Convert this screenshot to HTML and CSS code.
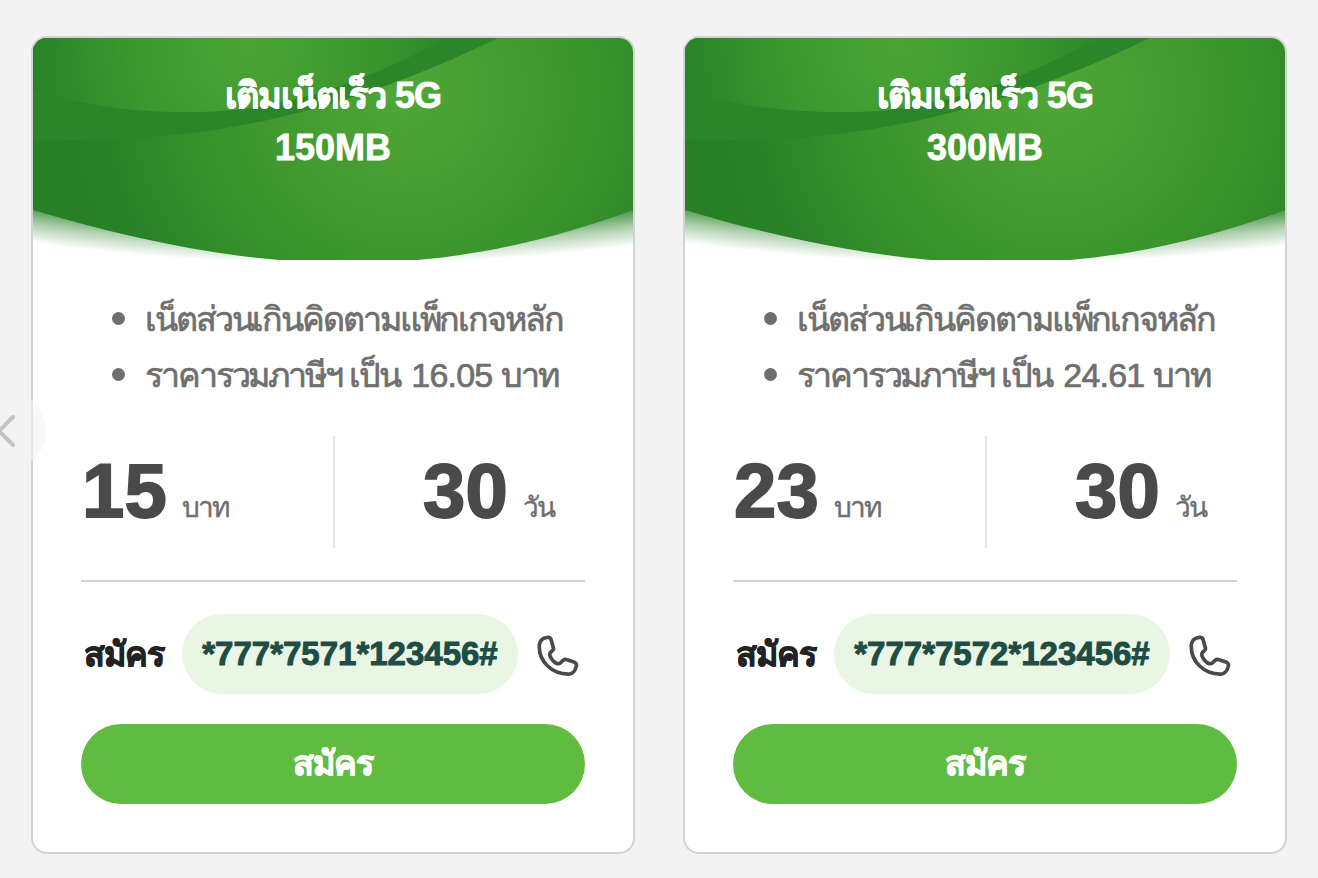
FILE: index.html
```html
<!DOCTYPE html>
<html lang="th">
<head>
    <meta charset="UTF-8">
    <meta name="viewport" content="width=device-width, initial-scale=1.0">
    <title>เติมเน็ตเร็ว 5G</title>
    <link rel="stylesheet" href="styles.css">
</head>
<body>
    <!-- Shared header artwork and icons -->
    <svg class="defs" width="0" height="0">
        <defs>
            <radialGradient id="mainGreen" gradientUnits="userSpaceOnUse" cx="370" cy="55" r="340">
                <stop offset="0" stop-color="#4fa737"/>
                <stop offset="0.4" stop-color="#41992f"/>
                <stop offset="0.72" stop-color="#338c2a"/>
                <stop offset="0.87" stop-color="#298227"/>
                <stop offset="1" stop-color="#288026"/>
            </radialGradient>
            <radialGradient id="topGreen" gradientUnits="userSpaceOnUse" cx="215" cy="10" r="215">
                <stop offset="0" stop-color="#4ba434"/>
                <stop offset="0.5" stop-color="#3f982f"/>
                <stop offset="1" stop-color="#298428"/>
            </radialGradient>
            <radialGradient id="fade" gradientUnits="userSpaceOnUse" cx="310" cy="-2072" r="2298">
                <stop offset="0.9845" stop-color="#2b8429" stop-opacity="0.85"/>
                <stop offset="0.992" stop-color="#2b8429" stop-opacity="0.38"/>
                <stop offset="1" stop-color="#2b8429" stop-opacity="0"/>
            </radialGradient>
            <symbol id="cover" viewBox="0 0 600 222">
                <rect y="150" width="600" height="72" fill="url(#fade)"/>
                <path d="M0 0H600V172C505 207 415 225 315 225C215 225 110 205 0 172Z" fill="url(#mainGreen)"/>
                <path d="M0 0H465C310 75 170 108 0 101Z" fill="#2b8629"/>
                <path d="M0 0H414C330 45 250 73 167 74C110 75 60 70 0 52Z" fill="url(#topGreen)"/>
            </symbol>
            <symbol id="phone" viewBox="36 45 126 126">
                <path d="M57 55L68 52Q75 51 78 58L85 83Q87 88 82 92L76 98Q73 102 75 108Q83 126 97 131Q102 132 106 129L114 121Q119 117 126 119L149 127Q156 130 154 138Q150 158 135 162C82 165 40 124 43 75Q46 59 57 55Z"
                      fill="none" stroke="#4a4a4a" stroke-width="11" stroke-linejoin="round"/>
            </symbol>
        </defs>
    </svg>

    <div class="slider">
        <div class="card">
            <div class="card-header">
                <svg class="cover"><use href="#cover"/></svg>
                <h2 class="card-title"><span class="title-name">เติมเน็ตเร็ว 5G</span><br>150MB</h2>
            </div>
            <div class="card-body">
                <ul class="details">
                    <li>เน็ตส่วนเกินคิดตามแพ็กเกจหลัก</li>
                    <li>ราคารวมภาษีฯ เป็น <span class="detail-price">16.05</span> บาท</li>
                </ul>
                <div class="summary">
                    <div class="price"><strong>15</strong><span>บาท</span></div>
                    <div class="days"><strong>30</strong><span>วัน</span></div>
                </div>
                <div class="ussd">
                    <span class="ussd-label">สมัคร</span>
                    <span class="ussd-code">*777*7571*123456#</span>
                    <svg class="phone-icon"><use href="#phone"/></svg>
                </div>
                <button class="apply-button">สมัคร</button>
            </div>
        </div>

        <div class="card">
            <div class="card-header">
                <svg class="cover"><use href="#cover"/></svg>
                <h2 class="card-title"><span class="title-name">เติมเน็ตเร็ว 5G</span><br>300MB</h2>
            </div>
            <div class="card-body">
                <ul class="details">
                    <li>เน็ตส่วนเกินคิดตามแพ็กเกจหลัก</li>
                    <li>ราคารวมภาษีฯ เป็น <span class="detail-price">24.61</span> บาท</li>
                </ul>
                <div class="summary">
                    <div class="price"><strong>23</strong><span>บาท</span></div>
                    <div class="days"><strong>30</strong><span>วัน</span></div>
                </div>
                <div class="ussd">
                    <span class="ussd-label">สมัคร</span>
                    <span class="ussd-code">*777*7572*123456#</span>
                    <svg class="phone-icon"><use href="#phone"/></svg>
                </div>
                <button class="apply-button">สมัคร</button>
            </div>
        </div>

        <button class="prev-button" aria-label="ก่อนหน้า">
            <svg width="80" height="80" viewBox="0 0 80 80">
                <path d="M47 26L33 40L47 54" fill="none" stroke="#c3c3c3" stroke-width="4" stroke-linecap="round" stroke-linejoin="round"/>
            </svg>
        </button>
    </div>
</body>
</html>
```
FILE: styles.css
```css
* {
    box-sizing: border-box;
}

body {
    margin: 0;
    background: #f3f3f3;
    font-family: "Liberation Sans", Arial, sans-serif;
    color: #6f6f6f;
    overflow: hidden;
}

.defs {
    position: absolute;
}

.slider {
    position: relative;
    display: flex;
    gap: 48px;
    height: 878px;
    padding: 36px 31px 24px;
}

/* Card */
.card {
    flex: none;
    width: 604px;
    background: #fff;
    border: 2px solid #d3d3d3;
    border-radius: 16px;
    overflow: hidden;
}

.card-header {
    position: relative;
    height: 222px;
    padding-top: 32px;
}

.cover {
    position: absolute;
    top: 0;
    left: 0;
    width: 600px;
    height: 222px;
}

.card-title {
    position: relative;
    margin: 0;
    color: #fff;
    font-size: 36px;
    line-height: 52px;
    text-align: center;
    white-space: nowrap;
    -webkit-text-stroke: 0.8px #fff;
}

.title-name {
    letter-spacing: -1px;
}

.card-body {
    padding: 31px 48px 0;
}

.details {
    margin: 0;
    padding: 0 0 0 64px;
    list-style: none;
    font-size: 34px;
    line-height: 56px;
    letter-spacing: -2.1px;
    white-space: nowrap;
    -webkit-text-stroke: 0.7px #6f6f6f;
}

.details li {
    position: relative;
    height: 56px;
}

.details li::before {
    content: "";
    position: absolute;
    left: -33px;
    top: 21px;
    width: 13px;
    height: 13px;
    border-radius: 50%;
    background: #6f6f6f;
}

.detail-price {
    margin: 0 1px 0 4px;
    letter-spacing: -0.8px;
}

/* Price and days */
.summary {
    display: grid;
    grid-template-columns: 1fr 1fr;
    grid-template-rows: 112px;
    margin-top: 33px;
    line-height: 109px;
    white-space: nowrap;
}

.summary strong {
    color: #4a4a4a;
    font-size: 76px;
    letter-spacing: 0.3px;
    margin-right: 15px;
    -webkit-text-stroke: 1.8px #4a4a4a;
}

.summary span {
    font-size: 28px;
    letter-spacing: -1.9px;
    -webkit-text-stroke: 0.4px #6f6f6f;
}

.price {
    padding-left: 1px;
}

.days {
    border-left: 2px solid #e5e5e5;
    padding-left: 88px;
}

.ussd {
    display: flex;
    align-items: center;
    margin-top: 32px;
    padding: 32px 0 0 3px;
    border-top: 2px solid #d3d3d3;
    white-space: nowrap;
}

.ussd-label {
    width: 98px;
    color: #222;
    font-size: 34px;
    font-weight: bold;
    letter-spacing: -1px;
    line-height: 80px;
    padding-bottom: 2px;
    height: 80px;
    -webkit-text-stroke: 0.8px #222;
}

.ussd-code {
    width: 336px;
    height: 80px;
    border-radius: 40px;
    background: #e9f6e4;
    color: #1d4d45;
    font-size: 33px;
    font-weight: bold;
    line-height: 80px;
    text-align: center;
    -webkit-text-stroke: 1px #1d4d45;
}

.phone-icon {
    width: 42px;
    height: 42px;
    margin: 4px 0 0 19px;
}

.apply-button {
    display: block;
    width: 100%;
    height: 80px;
    margin-top: 30px;
    padding: 0 0 3px;
    border: none;
    border-radius: 40px;
    background: #60bc40;
    color: #fff;
    font-family: inherit;
    font-size: 34px;
    font-weight: bold;
    letter-spacing: -0.8px;
    -webkit-text-stroke: 0.8px #fff;
    cursor: pointer;
}

/* Slider arrow */
.prev-button {
    position: absolute;
    left: -34px;
    top: 391px;
    width: 80px;
    height: 80px;
    padding: 0;
    border: none;
    border-radius: 50%;
    background: rgba(243, 243, 243, 0.6);
}
```
